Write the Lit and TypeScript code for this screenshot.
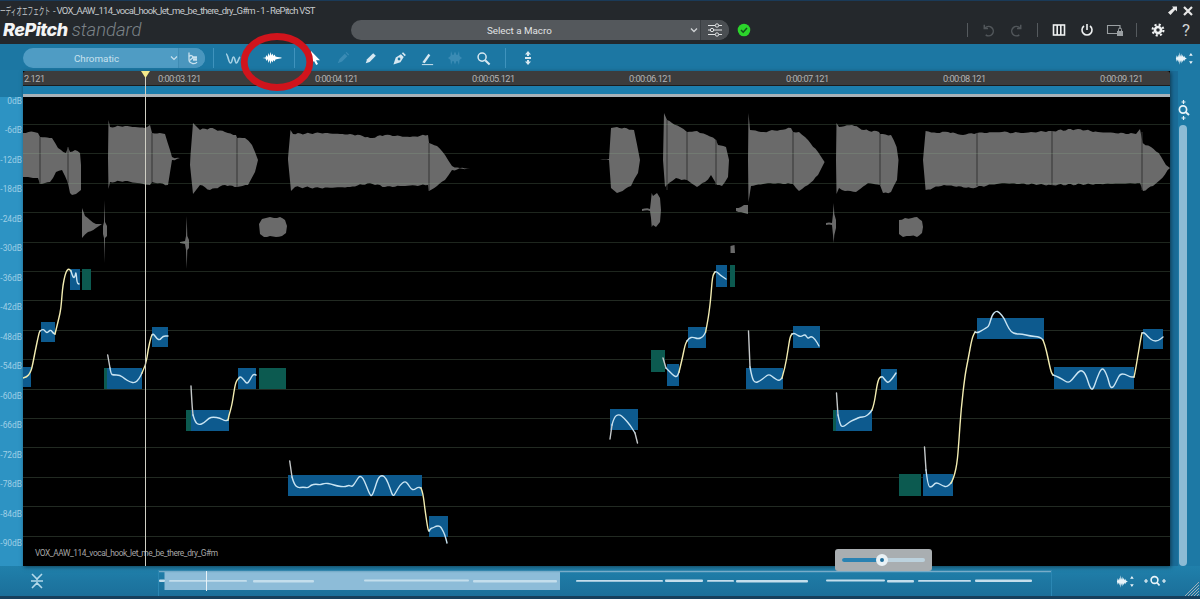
import { LitElement, html, css, svg } from "lit";
import { customElement } from "lit/decorators.js";

type P = [number, number];
const jag = (pts: P[], seed: number): P[] => {
  const out: P[] = [];
  for (let i = 0; i < pts.length - 1; i++) {
    const [x0, y0] = pts[i];
    const [x1, y1] = pts[i + 1];
    const n = Math.max(1, Math.floor(Math.abs(x1 - x0) / 2.4));
    for (let s = 0; s < n; s++) {
      const t = s / n;
      const x = x0 + (x1 - x0) * t;
      const j = s === 0 ? 0 : Math.sin(seed + x * 1.9) * 0.5 + Math.sin(seed * 2 + x * 0.7) * 0.4;
      out.push([x, y0 + (y1 - y0) * t + j]);
    }
  }
  out.push(pts[pts.length - 1]);
  return out;
};
const poly = (pts: P[]) => "M" + pts.map((p) => `${p[0].toFixed(1)} ${p[1].toFixed(1)}`).join("L") + "Z";
const smooth = (p: P[]) => {
  let d = `M${p[0][0]} ${p[0][1]}`;
  for (let i = 1; i < p.length - 1; i++) {
    const mx = (p[i][0] + p[i + 1][0]) / 2;
    const my = (p[i][1] + p[i + 1][1]) / 2;
    d += `Q${p[i][0]} ${p[i][1]} ${mx} ${my}`;
  }
  const l = p[p.length - 1];
  return d + `L${l[0]} ${l[1]}`;
};

const WAVES: P[][] = [
  [[23,133],[34,132],[38,133],[40,137],[52,138],[58,148],[66,153],[68,147],[70,152],[75,150],[80,153],[81,165],[81,190],[76,194],[72,195],[70,193],[68,183],[62,170],[56,172],[50,182],[40,184],[38,178],[23,177]],
  [[108,158],[108.5,120],[110,127],[125,126],[145,128],[150,125],[152,133],[165,134],[170,150],[172,157],[180,158],[172,160],[168,185],[152,182],[150,185],[125,181],[110,182],[108.5,189]],
  [[190.5,155],[193,123],[200,130],[210,128],[225,132],[236,135],[237,138],[245,138],[252,145],[258,160],[255,172],[248,185],[237,187],[225,185],[210,190],[200,185],[193,194],[190,165]],
  [[288,158],[290.5,130],[293,134],[320,133],[360,135],[370,138],[385,135],[410,137],[428,135],[429,143],[437,146],[445,155],[452,166],[460,168],[470,168],[452,170],[445,180],[437,186],[429,191],[428,185],[400,186],[385,187],[370,183],[350,187],[320,188],[295,187],[291,191],[288,160]],
  [[600,159],[609,159],[611,128],[617,127],[634,130],[640,160],[638,173],[631,186],[617,193],[611,188],[609,160]],
  [[663,160],[664,113],[667,120],[672,123],[680,127],[687,132],[697,131],[700,133],[707,135],[716,140],[718,145],[726,147],[729,160],[728,177],[722,186],[717,185],[711,175],[705,182],[697,187],[687,180],[676,178],[669,183],[665,187]],
  [[748,160],[748.5,113],[750,130],[761,132],[780,130],[791,128],[793,132],[799,132],[808,140],[818,152],[824.6,162],[818,175],[808,185],[799,191],[793,184],[768,183],[751,186],[748.5,202]],
  [[836,160],[836.5,123],[839,127],[852,125],[864,130],[879,132],[880,134],[891,135],[896.6,147],[898.5,160],[897,180],[891,192],[883,193],[880,185],[868,183],[856,192],[845,191],[839,188],[836.5,194]],
  [[923,160],[925.6,131],[937,133],[948,132],[963,135],[977,133],[1002,132],[1021,133],[1051,131],[1078,129],[1098,132],[1136,134],[1140,129],[1142.7,143],[1151,147],[1158.7,153],[1166,165],[1170,168],[1160,180],[1153,186],[1143,191],[1140,183],[1098,184],[1051,185],[1002,183],[971,188],[944,185],[933,188],[925.6,190]],
  [[82,208],[85,216],[90,220],[96,224],[102,224],[96,228],[88,232],[82,238]],
  [[104,222],[104.5,200],[105,222],[107,226],[107,236],[105,238],[104.5,263],[104,238],[103,234],[103,226]],
  [[180,242],[185,241],[186,236],[186.7,216],[187.3,236],[189,240],[189,248],[187.3,250],[186.7,269],[186,250],[185,244],[180,243]],
  [[259,224],[262,219],[266,218],[270,217],[274,218],[280,217],[285,220],[287,226],[286,233],[282,236],[276,237],[270,236],[264,237],[260,234]],
  [[642,209],[650,209],[651,200],[651.7,193],[653,196],[657,193],[660,198],[661,210],[660,222],[656,227],[653,225],[651.7,227],[651,218],[650,211],[642,211]],
  [[736,208],[741,207],[744,205],[748,205],[748,214],[744,213],[741,212],[736,211]],
  [[826,223],[832,223],[833,214],[833.7,203],[834.3,214],[836,220],[836,228],[834.3,235],[833.7,243],[833,235],[832,225],[826,225]],
  [[899,220],[905,218],[912,218],[917,217],[922,221],[923,227],[922,233],[917,237],[910,236],[903,237],[899,234]],
  [[730.5,246],[734.5,245],[735,253],[730.5,253]],
];
const WAVE_CUTS: number[][] = [
  [40,137,184],[68,147,183],[152,133,182],[237,138,187],[429,143,191],[667,120,190],[687,132,180],[716,140,185],[793,132,184],[880,134,185],[977,133,186],[1052,131,185],[1142,132,190],
];

const NOTES: number[][] = [
  [23,367,31,387],[41,322,55,342],[70,269,80,290],[107,368,142,389],[152,327,168,347],[191,410,229,431],
  [238,368,256,389],[288,475,422,496],[429,516,448,537],[610,409,638,430],[667,364,679,386],[688,327,706,348],
  [716,265,727,287],[746,368,783,389],[793,326,820,348],[836,410,872,431],[881,369,897,390],[923,474,953,496],
  [977,318,1044,339],[1054,367,1134,389],[1143,329,1163,349],
];
const TEAL: number[][] = [
  [82,269,91,290],[104,368,107,389],[186,410,191,431],[259,368,286,389],[651,350,665,372],[730,265,735,287],[833,410,836,431],[899,474,921,496],
];

const CURVES: { c: string; p: P[] }[][] = [
  [
    { c: "y", p: [[23,378],[27,377],[30,373],[32,368],[35,352],[39,333],[40,331]] },
    { c: "b", p: [[43,329],[45,331],[47,333],[49,331],[51,330],[53,333],[55,334]] },
    { c: "y", p: [[59,318],[61,308],[62,295],[63,285],[65,275],[67,270],[69,269],[71,271]] },
    { c: "b", p: [[73,278],[75,277],[76,271],[77,283],[79,284]] },
  ],
  [
    { c: "g", p: [[107.7,355],[110,368]] },
    { c: "b", p: [[111,374],[113,375],[120,375],[125,379],[130,382],[135,383],[139,379],[142,373]] },
    { c: "y", p: [[146,365],[148,350],[151,337],[152,335]] },
    { c: "b", p: [[153,333],[157,339],[160,340],[163,336],[168,336]] },
  ],
  [
    { c: "g", p: [[191,386],[192,405],[193,415]] },
    { c: "b", p: [[195,422],[199,425],[204,423],[209,418],[213,417],[220,418],[225,421],[228,420]] },
    { c: "y", p: [[229,415],[232,405],[235,385],[237,380],[239,378]] },
    { c: "b", p: [[240,376],[244,380],[247,384],[250,380],[253,374],[256,375]] },
  ],
  [
    { c: "g", p: [[289.7,461],[291,470],[292,477]] },
    { c: "b", p: [[294,484],[298,488],[303,487],[308,488],[311,485],[316,484],[320,485],[325,483],[331,484],[337,486],[345,487],[349,485],[352,487],[355,483],[358,478],[360,476],[363,478],[366,485],[370,495],[372,496],[375,488],[378,478],[382,475],[386,478],[390,488],[393,497],[396,492],[400,485],[405,481],[408,484],[411,489],[414,490],[418,487],[421,488]] },
    { c: "y", p: [[423,493],[425,510],[428,530],[429,531]] },
    { c: "b", p: [[431,528],[433,528],[436,526],[440,526],[442,529],[445,535],[447,543]] },
  ],
  [
    { c: "g", p: [[610,439],[612,425]] },
    { c: "b", p: [[614,417],[619,414],[624,418],[630,425],[635,433]] },
    { c: "g", p: [[637.5,443]] },
  ],
  [
    { c: "g", p: [[663,358],[666,368]] },
    { c: "b", p: [[670,372],[674,376],[677,377],[679,372]] },
    { c: "y", p: [[682,360],[685,345],[687,341]] },
    { c: "b", p: [[689,338],[693,337],[698,339],[703,337],[705.6,332]] },
    { c: "y", p: [[708,320],[710,305],[711,295],[712,282],[713,275],[715,272]] },
    { c: "b", p: [[716,271],[720,275],[726,279]] },
  ],
  [
    { c: "g", p: [[748.5,331],[750,367]] },
    { c: "b", p: [[752,378],[755,383],[760,381],[765,377],[769,374],[774,378],[779,381],[782,378]] },
    { c: "y", p: [[785,368],[788,350],[790,337],[792,334]] },
    { c: "b", p: [[794,333],[797,335],[801,337],[805,334],[808,339],[811,336],[815,339],[819,346]] },
  ],
  [
    { c: "g", p: [[836.5,393],[838,415]] },
    { c: "b", p: [[840,425],[843,427],[847,424],[851,421],[856,419],[860,417],[865,417],[870,413],[872,410]] },
    { c: "y", p: [[874,405],[877,385],[879,378],[881,377]] },
    { c: "b", p: [[882,376],[885,380],[888,383],[892,379],[896,373]] },
  ],
  [
    { c: "g", p: [[924.5,447],[926,470]] },
    { c: "b", p: [[928,487],[932,487],[935,483],[938,483],[943,486],[947,487],[951,483]] },
    { c: "y", p: [[953,480],[957,465],[959,440],[961,410],[965,375],[968,360],[972,338],[975,332]] },
    { c: "b", p: [[977,333],[981,331],[986,328],[989,326],[992,315],[996,311],[999,312],[1004,318],[1007,325],[1011,332],[1016,334],[1022,334],[1030,336],[1040,337],[1043,340]] },
    { c: "y", p: [[1045,345],[1048,358],[1051,372],[1053,375]] },
    { c: "b", p: [[1056,376],[1062,379],[1068,383],[1072,380],[1078,372],[1082,370],[1086,375],[1090,388],[1093,390],[1097,378],[1101,369],[1104,369],[1108,378],[1110,387],[1113,388],[1117,380],[1120,374],[1125,374],[1130,377],[1134,377]] },
    { c: "y", p: [[1135,373],[1138,355],[1141,337],[1142,333]] },
    { c: "b", p: [[1144,332],[1148,337],[1153,341],[1158,341],[1163,337]] },
  ],
];

const OVERVIEW: number[][] = [
  [159,165],[169,247],[253,314],[364,469],[473,557],[576,663],[665,703],[707,734],[736,808],[826,885],[887,914],[918,971],[975,1032],
];
const DB = ["0dB","-6dB","-12dB","-18dB","-24dB","-30dB","-36dB","-42dB","-48dB","-54dB","-60dB","-66dB","-72dB","-78dB","-84dB","-90dB"];
const TIMES = ["2.121","0:00:03.121","0:00:04.121","0:00:05.121","0:00:06.121","0:00:07.121","0:00:08.121","0:00:09.121"];
const GRID = Array.from({ length: 15 }, (_, k) => Math.round(94.6 + 29.4 * (k + 1)) + 0.5);

const spikeWave = "M0 7L3 6.5L4 4L5 6L6 2L7 5L8 1L9 4.5L10 2.5L11 5L12 3.5L13 5.5L15 6L19 6.6L19 7.2L15 8L13 8.5L12 10.5L11 9L10 11.5L9 9.5L8 13L7 9L6 12L5 8L4 10L3 7.5Z";
const waveArrows = html`<svg class="wa" viewBox="0 0 22 16" width="20" height="15">
  <path fill="currentColor" d="M1 8L2 4.5L2.8 7L3.6 3.5L4.4 6.5L5.2 1L6 6L6.8 2.5L7.6 6L8.4 4L9.2 6.5L10 5L11 6.8L13 8L11 9.2L10 11L9.2 9.5L8.4 12L7.6 10L6.8 13.5L6 10L5.2 15L4.4 9.5L3.6 12.5L2.8 9L2 11.5Z"/>
  <path fill="currentColor" d="M17.5 2L19.5 5H15.5Z M17.5 14L15.5 11H19.5Z"/>
</svg>`;

@customElement("app-root")
export class AppRoot extends LitElement {
  static styles = css`
    :host { display: block; width: 1200px; height: 599px; overflow: hidden; font-family: Roboto, "Noto Sans CJK JP", sans-serif; }
    svg { display: block; }
    .win { position: relative; width: 1200px; height: 599px; background: #1d79a5; display: flex; flex-direction: column; overflow: hidden; }
    .head { height: 44px; flex: none; background: #24282c; border-top: 1px solid #1a3a58; box-sizing: border-box; position: relative; }
    .title { height: 19px; display: flex; align-items: center; padding-right: 6px; font-size: 9.5px; color: #c6cacd; white-space: nowrap; }
    .kana { display: inline-block; width: 50px; font-size: 10px; transform: scaleX(.56); transform-origin: 0 50%; }
    .tx { margin-left: 3px; flex: 1; letter-spacing: -.7px; }
    .winb { display: flex; gap: 4px; color: #e8e8e8; }
    .bar { height: 20px; display: flex; align-items: center; }
    .logo { width: 351px; box-sizing: border-box; padding-left: 3px; display: flex; align-items: baseline; gap: 4px; white-space: nowrap; line-height: 20px; }
    .logo b { font: italic 800 18px Inter, Roboto, sans-serif; letter-spacing: -.5px; color: #f3f4f5; }
    .logo i { font: italic 300 18.5px Roboto, sans-serif; color: #7b8287; }
    .macro { width: 379px; height: 20px; background: #54585c; border-radius: 10px; display: flex; align-items: center; color: #e0e2e3; font-size: 9.8px; overflow: hidden; }
    .macro span { width: 339px; text-align: center; }
    .macro .ch { width: 12px; color: #cfd2d4; }
    .macro .sl { width: 28px; height: 20px; border-left: 1px solid #3a3e42; background: #4a4e52; display: flex; align-items: center; justify-content: center; color: #dfe1e2; }
    .ok { margin-left: 8px; }
    .hright { margin-left: 216px; display: flex; align-items: center; }
    .hi { width: 28px; display: flex; justify-content: center; color: #eef0f1; }
    .hi.dim { color: #51565a; }
    .hi.gray { color: #9a9fa2; }
    .m6 { margin-left: 6px; }
    .m7 { margin-left: 7px; }
    .q { font: 17px Roboto, sans-serif; color: #cfd2d4; line-height: 20px; }
    .vd { width: 1px; height: 14px; background: #555a5e; }
    .tools { height: 26px; flex: none; display: flex; align-items: center; background: #1c77a3; padding: 2px 0 0 23px; box-sizing: border-box; color: #fff; position: relative; }
    .scale { width: 182px; height: 20px; border-radius: 10px; background: #4f9cc4; display: flex; align-items: center; color: #c8e1ee; font-size: 9.8px; overflow: hidden; }
    .scale span { width: 147px; text-align: center; }
    .scale .ch { width: 8px; }
    .scale .acc { flex: 1; height: 20px; border-left: 1px solid #3f8cb4; background: #4a96be; display: flex; align-items: center; justify-content: center; }
    .tv { width: 1px; height: 20px; background: #3f93bd; }
    .t { width: 28px; height: 20px; display: flex; align-items: center; justify-content: center; color: #d7e8f1; }
    .t.dim { color: #3a8bb4; }
    .t.w { color: #a5d0e4; margin-left: 5px; }
    .t.on { color: #fff; }
    .t.sw { margin-left: 11px; }
    .gapA { width: 8px; } .gapB { width: 6px; } .gapC { width: 8px; }
    .spacer { flex: 1; }
    .twa { width: 30px; display: flex; justify-content: center; color: #eaf4f9; }
    .ring { position: absolute; left: 240px; top: -11px; pointer-events: none; z-index: 5; }
    .mid { height: 496px; flex: none; display: flex; padding-top: 1px; box-sizing: border-box; }
    .db { width: 23px; flex: none; padding-top: 16px; box-sizing: border-box; background: linear-gradient(#1d79a5 27px, #2d93c3 27px); margin-top: -1px; }
    .db div { height: 29.5px; display: flex; align-items: center; justify-content: flex-end; padding-right: 1px; font-size: 8.4px; color: #9fcfe6; white-space: nowrap; }
    .editor { width: 1147px; flex: none; position: relative; box-shadow: 1px 1px 4px rgba(0,0,0,.5); background: #000; }
    .ruler { height: 15px; background: #3c3c3c; border-bottom: 1px solid #1c1c1c; box-sizing: border-box; display: flex; align-items: center; font-size: 9.2px; letter-spacing: -.5px; color: #b4b4b4; white-space: nowrap; border-radius: 3px 3px 0 0; }
    .ruler span { flex: 0 0 157px; }
    .ruler span:first-child { flex: 0 0 135px; padding-left: 1px; box-sizing: border-box; }
    .strip { height: 8px; background: #1c7dac; }
    .gbar { height: 3px; background: #a7b2b8; }
    .cv { width: 1147px; height: 469px; }
    .wv { fill: #6a6a6a; }
    .cut { stroke: #343434; stroke-width: 1; }
    .grid { stroke: #222a22; stroke-width: 1; }
    .gridw { stroke: rgba(150,190,150,.2); stroke-width: 1; }
    .note { fill: #0d5a8e; }
    .teal { fill: #0c5a50; }
    .crv { fill: none; stroke-width: 1.4; stroke-linejoin: round; stroke-linecap: round; }
    .crv.b { stroke: #c9e4f2; } .crv.y { stroke: #f3edb2; } .crv.g { stroke: #c4c8ca; }
    .fname { position: absolute; left: 12px; bottom: 8px; font-size: 8.4px; letter-spacing: -.45px; color: #a6a6a6; white-space: nowrap; }
    .ph { position: absolute; left: 122px; top: 6px; bottom: 0; width: 1px; background: #cfcfc4; }
    .tri { position: absolute; left: 118px; top: 0; }
    .rail { width: 30px; flex: none; display: flex; flex-direction: column; padding-top: 26px; box-sizing: border-box; background: linear-gradient(90deg, #1a6c98 8px, #1d79a5 8px); color: #e6f2f8; }
    .zm { height: 28px; margin-left: 6px; }
    .sb { width: 8px; flex: 1; margin-left: 9px; border-radius: 4px; background: #8dbbd5; }
    .foot { height: 33px; flex: none; display: flex; box-sizing: border-box; border-bottom: 3px solid #163f5c; background: linear-gradient(#2080ab, #1b6f9a); }
    .fl { width: 158px; flex: none; display: flex; align-items: center; padding-left: 30px; box-sizing: border-box; color: #b3d9ea; }
    .ov { width: 894px; height: 30px; flex: none; }
    .vw { fill: #8dbcd8; }
    .ovw { fill: #c4deec; }
    .fr { flex: 1; display: flex; align-items: center; color: #eaf4f9; padding-left: 64px; gap: 7px; position: relative; }
    .grip { position: absolute; right: 1px; bottom: 0; }
    .pop { position: absolute; left: 835px; top: 549px; width: 97px; height: 22px; background: #a9aeb1; border-radius: 3px; display: flex; align-items: center; padding: 0 7px; box-sizing: border-box; z-index: 3; }
    .trk { flex: 1; height: 4px; border-radius: 2px; background: #bcd2de; display: flex; align-items: center; }
    .fill { width: 35px; height: 4px; background: #2a82b2; border-radius: 2px 0 0 2px; }
    .th { width: 12px; height: 12px; box-sizing: border-box; border-radius: 50%; background: #1d6d9a; border: 4px solid #e9f1f5; margin-left: -1px; }
  `;

  render() {
    return html`<div class="win">
      <div class="head">
        <div class="title">
          <span class="kana">ーディオエフェクト</span><span class="tx">- VOX_AAW_114_vocal_hook_let_me_be_there_dry_G#m - 1 - RePitch VST</span>
          <span class="winb">
            <svg viewBox="0 0 12 12" width="12" height="12"><path fill="currentColor" d="M6 1.5H11V6.5L9.2 4.8L4.5 10L2 7.5L7.2 2.9Z"/></svg>
            <svg viewBox="0 0 12 12" width="12" height="12"><path stroke="currentColor" stroke-width="2.2" d="M2 2L10 10M10 2L2 10"/></svg>
          </span>
        </div>
        <div class="bar">
          <div class="logo"><b>RePitch</b><i>standard</i></div>
          <div class="macro">
            <span>Select a Macro</span>
            <svg class="ch" viewBox="0 0 10 10" height="10"><path d="M2 3.5L5 6.5L8 3.5" fill="none" stroke="currentColor" stroke-width="1.3"/></svg>
            <div class="sl"><svg viewBox="0 0 16 14" width="16" height="14" fill="none" stroke="currentColor" stroke-width="1"><path d="M1 2.5H15M1 7H15M1 11.5H15"/><circle cx="10" cy="2.5" r="1.7" fill="#4a4e52"/><circle cx="5" cy="7" r="1.7" fill="#4a4e52"/><circle cx="10" cy="11.5" r="1.7" fill="#4a4e52"/></svg></div>
          </div>
          <svg class="ok" viewBox="0 0 14 14" width="14" height="14"><circle cx="7" cy="7" r="6.3" fill="#2bd42b"/><path d="M4 7L6.2 9.2L10 5" fill="none" stroke="#14501c" stroke-width="1.5"/></svg>
          <div class="hright">
            <span class="vd"></span>
            <span class="hi dim m6"><svg viewBox="0 0 16 16" width="15" height="15" fill="none" stroke="currentColor" stroke-width="1.6"><path d="M4.5 5.2A5 5 0 1 1 5 12.6"/><path d="M3.5 1.8V5.8H7.5"/></svg></span>
            <span class="hi dim"><svg viewBox="0 0 16 16" width="15" height="15" fill="none" stroke="currentColor" stroke-width="1.6"><path d="M11.5 5.2A5 5 0 1 0 11 12.6"/><path d="M12.5 1.8V5.8H8.5"/></svg></span>
            <span class="vd m7"></span>
            <span class="hi m7"><svg viewBox="0 0 14 14" width="14" height="14" fill="none" stroke="currentColor" stroke-width="1.6"><rect x="1.5" y="2" width="11" height="10"/><path d="M5.2 2V12M8.8 2V12"/></svg></span>
            <span class="hi"><svg viewBox="0 0 14 14" width="14" height="14" fill="none" stroke="currentColor" stroke-width="1.6"><path d="M7 1V7"/><path d="M4 3A5 5 0 1 0 10 3"/></svg></span>
            <span class="hi gray"><svg viewBox="0 0 18 14" width="18" height="14"><path fill="none" stroke="currentColor" stroke-width="1.1" d="M11 10.5H1.5V2.5H14V6"/><path fill="currentColor" d="M11 8H17V13H11Z"/><path fill="none" stroke="currentColor" d="M12.5 8V6.5A1.5 1.5 0 0 1 15.5 6.5V8"/></svg></span>
            <span class="vd m7"></span>
            <span class="hi m7"><svg viewBox="0 0 16 16" width="14" height="14"><circle cx="8" cy="8" r="6.2" fill="none" stroke="currentColor" stroke-width="2.4" stroke-dasharray="2.4 2.47"/><circle cx="8" cy="8" r="5" fill="currentColor"/><circle cx="8" cy="8" r="2" fill="#24282c"/></svg></span>
            <span class="hi q">?</span>
          </div>
        </div>
      </div>

      <div class="tools">
        <div class="scale">
          <span>Chromatic</span>
          <svg class="ch" viewBox="0 0 8 8" height="8"><path d="M1 2.5L4 5.5L7 2.5" fill="none" stroke="currentColor" stroke-width="1.2"/></svg>
          <div class="acc"><svg viewBox="0 0 14 14" width="14" height="14" fill="none" stroke="currentColor" stroke-width="1.3"><path d="M4 1.5V9C4 11 6 12 7.5 12.5C9.5 13 11 12.5 12 11"/><path d="M4 5.5C6 3.5 8.5 5 7.5 7L4.5 9.5"/><path d="M9 5V10M11 5V10M8 6.5H12M8 8.5H12"/></svg></div>
        </div>
        <span class="gapA"></span><span class="tv"></span>
        <span class="t w"><svg viewBox="0 0 16 14" width="16" height="14" fill="none" stroke="currentColor" stroke-width="1.6"><path d="M1 3C3 3 3.5 12 5.5 12C7.5 12 7 6 8.5 6C10 6 10 12 11.5 12C13 12 13.5 7 15 6"/></svg></span>
        <span class="t on sw"><svg viewBox="0 0 19 14" width="20" height="14"><path fill="currentColor" d=${spikeWave}/></svg></span>
        <span class="gapC"></span><span class="tv"></span>
        <span class="gapB"></span>
        <span class="t on"><svg viewBox="0 0 16 16" width="16" height="16"><path fill="currentColor" d="M4 1V14L7 11L9.2 15L11 14L9 10.2H13Z"/></svg></span>
        <span class="t dim"><svg viewBox="0 0 16 16" width="14" height="14"><path fill="currentColor" d="M2 14L4 9L10 3L13 6L7 12Z M11 2L12 1L15 4L14 5Z"/></svg></span>
        <span class="t"><svg viewBox="0 0 16 16" width="14" height="14"><path fill="currentColor" d="M2 14L3.5 9.5L10.5 2.5L13.5 5.5L6.5 12.5Z"/></svg></span>
        <span class="t"><svg viewBox="0 0 16 16" width="15" height="15"><path fill="currentColor" d="M1.5 14.5L4 7L9.5 3.5L12.5 6.5L9 12ZM10.5 2.5L11.8 1.2L14.8 4.2L13.5 5.5Z"/><circle cx="7.5" cy="8.5" r="1.5" fill="#1c77a3"/></svg></span>
        <span class="t"><svg viewBox="0 0 16 16" width="15" height="15"><path fill="currentColor" d="M2.5 12L9 3L11 4.5L5 13Z"/><path stroke="currentColor" stroke-width="1" d="M2 14.5H14"/></svg></span>
        <span class="t dim"><svg viewBox="0 0 16 16" width="16" height="16"><path fill="currentColor" d="M4 1L5.5 5H6.5L8 1.5L9.5 5H10.5L12 1L12.5 6L15 8L12.5 10L12 15L10.5 11H9.5L8 14.5L6.5 11H5.5L4 15L3.5 10L1 8L3.5 6Z"/></svg></span>
        <span class="t"><svg viewBox="0 0 16 16" width="15" height="15" fill="none" stroke="currentColor"><circle cx="6.5" cy="6.5" r="4.3" stroke-width="1.6"/><path d="M9.8 9.8L14.5 14.5" stroke-width="2.2"/></svg></span>
        <span class="gapC"></span><span class="tv"></span><span class="gapC"></span>
        <span class="t"><svg viewBox="0 0 10 16" width="10" height="16"><path fill="currentColor" d="M5 1L8 4.5H6V6H4V4.5H2ZM2 7H8V9H2ZM4 10H6V11.5H8L5 15L2 11.5H4Z"/></svg></span>
        <span class="spacer"></span>
        <span class="twa">${waveArrows}</span>
        <svg class="ring" width="74" height="60" viewBox="0 0 74 60"><ellipse cx="37" cy="29" rx="32.8" ry="25.5" fill="none" stroke="#d0141c" stroke-width="6.8"/></svg>
      </div>

      <div class="mid">
        <div class="db">${DB.map((d) => html`<div>${d}</div>`)}</div>
        <div class="editor">
          <div class="ruler">${TIMES.map((t) => html`<span>${t}</span>`)}</div>
          <div class="strip"></div>
          <div class="gbar"></div>
          <svg class="cv" viewBox="23 97 1147 469" width="1147" height="469">
            ${GRID.slice(6).map((y) => svg`<line class="grid" x1="23" x2="1170" y1=${y} y2=${y}/>`)}
            ${WAVES.map((w, i) => svg`<path class="wv" d=${poly(jag(w, i * 1.3 + 1))}/>`)}
            ${WAVE_CUTS.map((c) => svg`<line class="cut" x1=${c[0]} x2=${c[0]} y1=${c[1]} y2=${c[2]}/>`)}
            ${GRID.slice(0, 6).map((y) => svg`<line class="gridw" x1="23" x2="1170" y1=${y} y2=${y}/>`)}
            ${NOTES.map((n) => svg`<rect class="note" x=${n[0]} y=${n[1]} width=${n[2] - n[0]} height=${n[3] - n[1]}/>`)}
            ${TEAL.map((n) => svg`<rect class="teal" x=${n[0]} y=${n[1]} width=${n[2] - n[0]} height=${n[3] - n[1]}/>`)}
            ${CURVES.flatMap((segs) =>
              segs.map((s, i) => {
                const prev = i ? segs[i - 1].p[segs[i - 1].p.length - 1] : null;
                const pts: P[] = prev ? [prev, ...s.p] : s.p;
                return svg`<path class="crv ${s.c}" d=${smooth(pts)}/>`;
              })
            )}
          </svg>
          <div class="fname">VOX_AAW_114_vocal_hook_let_me_be_there_dry_G#m</div>
          <div class="ph"></div>
          <svg class="tri" viewBox="0 0 9 8" width="9" height="8"><path d="M0 0H9L4.5 7Z" fill="#f4e98a"/></svg>
        </div>
        <div class="rail">
          <div class="zm"><svg viewBox="0 0 18 28" width="18" height="28" fill="none" stroke="currentColor"><path d="M7.5 3V7M5.5 5H9.5" stroke-width="1.2"/><circle cx="7" cy="12.5" r="3.6" stroke-width="1.7"/><path d="M9.6 15L13 18" stroke-width="2"/><path d="M7.5 19V23M5.5 21H9.5" stroke-width="1.2"/></svg></div>
          <div class="sb"></div>
        </div>
      </div>

      <div class="foot">
        <div class="fl"><svg viewBox="0 0 14 18" width="14" height="18" fill="none" stroke="currentColor" stroke-width="1.6"><path d="M2 2L7 7L12 2M7 7V8M1 9H13M2 16L7 11L12 16M7 10V11"/></svg></div>
        <svg class="ov" viewBox="158 566 894 30" width="894" height="30">
          <rect class="vw" x="164.5" y="571" width="395.5" height="19"/>
          <line x1="158" x2="1052" y1="571.5" y2="571.5" stroke="#79aecb" stroke-width="1.4"/>
          ${OVERVIEW.map((o, i) => svg`<rect class="ovw" x=${o[0]} y=${580 - (i % 3 === 0 ? 0.4 : 0)} width=${o[1] - o[0]} height=${i % 2 ? 1.8 : 2.4} rx="1"/>`)}
          <line x1="206.5" x2="206.5" y1="571" y2="591" stroke="#e9f3f8"/>
          <line x1="158.5" x2="158.5" y1="571" y2="596" stroke="#2b87b3"/>
          <line x1="1051.5" x2="1051.5" y1="571" y2="596" stroke="#2b87b3"/>
        </svg>
        <div class="fr">
          ${waveArrows}
          <svg viewBox="0 0 24 14" width="24" height="14" fill="none" stroke="currentColor"><path d="M1 7H5M3 5V9M19 7H23M21 5V9" stroke-width="1.2"/><circle cx="11.5" cy="6" r="3.4" stroke-width="1.6"/><path d="M14 8.5L16.5 11.5" stroke-width="1.8"/></svg>
          <svg class="grip" viewBox="0 0 14 15" width="14" height="15" stroke="#9fb0b9" stroke-width="1"><path d="M14 1L0 15M14 4L3 15M14 7L6 15M14 10L9 15M14 13L12 15"/></svg>
        </div>
      </div>

      <div class="pop"><div class="trk"><div class="fill"></div><div class="th"></div></div></div>
    </div>`;
  }
}
